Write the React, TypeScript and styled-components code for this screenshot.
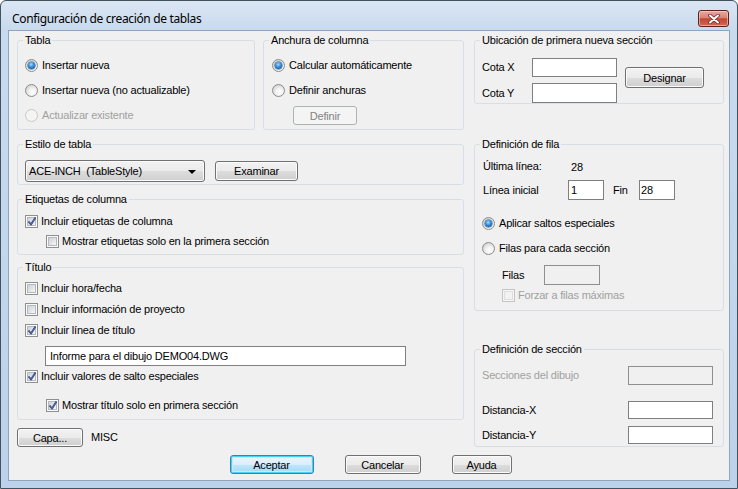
import React from "react";
import styled, { createGlobalStyle, css } from "styled-components";

const GlobalStyle = createGlobalStyle`
  html, body { margin: 0; padding: 0; background: #ffffff; }
  body { width: 738px; height: 489px; overflow: hidden; }
  *, *::before, *::after { box-sizing: border-box; }
`;

const Window = styled.div`
  width: 738px;
  height: 489px;
  border: 1px solid #43525f;
  border-radius: 6px 6px 0 0;
  background: linear-gradient(180deg, #dbe6f3 0px, #c8daee 29px, #bcd2ea 100%);
  padding: 0 7px 7px 7px;
  display: flex;
  flex-direction: column;
  font-family: "Liberation Sans", Arial, sans-serif;
  font-size: 11px;
  letter-spacing: -0.2px;
  color: #000;
`;

const TitleBar = styled.div`
  height: 29px;
  display: flex;
  justify-content: space-between;
  align-items: flex-start;
  flex: none;
`;

const Title = styled.div`
  font-family: "Noto Sans", "Open Sans", sans-serif;
  font-size: 12px;
  letter-spacing: -0.35px;
  line-height: 16px;
  padding: 10px 0 0 4px;
  color: #000;
`;

const CloseButton = styled.div`
  width: 31px;
  height: 17px;
  margin: 9px 1px 0 0;
  border: 1px solid #5e2018;
  border-radius: 3px;
  background: linear-gradient(180deg, #e8a99e 0%, #d88576 45%, #c24632 52%, #cf6a55 100%);
  box-shadow: inset 0 0 0 1px rgba(255, 220, 210, 0.55);
  display: flex;
  align-items: center;
  justify-content: center;
`;

const Client = styled.div`
  flex: 1;
  background: #f0f0f0;
  border: 1px solid #8ea4bf;
  padding: 3px 5px 0 8px;
  display: grid;
  grid-template-columns: 447px 250px;
  column-gap: 10px;
  row-gap: 8px;
  align-content: start;
`;

const Column = styled.div`
  display: flex;
  flex-direction: column;
`;

const TopRow = styled.div`
  display: flex;
  gap: 8px;
`;

const Group = styled.fieldset<{ $w?: number; $h: number; $mt?: number }>`
  margin: ${(p) => p.$mt ?? 0}px 0 0 0;
  padding: 0;
  min-width: 0;
  width: ${(p) => (p.$w ? `${p.$w}px` : "auto")};
  height: ${(p) => p.$h}px;
  border: 1px solid #d5dfe5;
  border-radius: 3px;
`;

const Legend = styled.legend`
  margin-left: 5px;
  padding: 0 2px;
  line-height: 13px;
  font-size: 11px;
`;

const Body = styled.div<{ $pt?: number; $pl?: number; $pr?: number }>`
  display: flex;
  flex-direction: column;
  padding: ${(p) => p.$pt ?? 0}px ${(p) => p.$pr ?? 0}px 0 ${(p) => p.$pl ?? 0}px;
`;

const Row = styled.div<{ $h?: number; $mt?: number; $indent?: number; $gap?: number; $between?: boolean }>`
  display: flex;
  align-items: center;
  height: ${(p) => (p.$h ? `${p.$h}px` : "auto")};
  margin-top: ${(p) => p.$mt ?? 0}px;
  padding-left: ${(p) => p.$indent ?? 0}px;
  gap: ${(p) => p.$gap ?? 0}px;
  justify-content: ${(p) => (p.$between ? "space-between" : "flex-start")};
`;

const Text = styled.span<{ $disabled?: boolean; $w?: number; $dy?: number; $pl?: number }>`
  color: ${(p) => (p.$disabled ? "#a0a0a0" : "#000")};
  white-space: pre;
  line-height: 13px;
  ${(p) => p.$w && css`width: ${p.$w}px; flex: none;`}
  ${(p) => p.$dy && css`padding-top: ${p.$dy}px;`}
  ${(p) => p.$pl && css`padding-left: ${p.$pl}px;`}
`;

const RadioCircle = styled.span<{ $checked?: boolean; $disabled?: boolean }>`
  position: relative;
  flex: none;
  width: 13px;
  height: 13px;
  border-radius: 50%;
  border: 1px solid ${(p) => (p.$disabled ? "#c8c8c8" : "#8c8c8c")};
  background: ${(p) =>
    p.$disabled
      ? "#f4f4f4"
      : "radial-gradient(circle at 60% 65%, #ffffff 0%, #f3f3f3 35%, #d2d2d2 80%, #c4c4c4 100%)"};
  margin-right: 4px;
  ${(p) =>
    p.$checked &&
    css`
      &::after {
        content: "";
        position: absolute;
        left: 2px;
        top: 2px;
        width: 7px;
        height: 7px;
        border-radius: 50%;
        background: radial-gradient(circle at 45% 35%, #a9dcff 0%, #3d95df 40%, #0f4f98 85%, #0a3b74 100%);
        box-shadow: 0 0 0 0.5px #1c4f86;
      }
    `}
`;

const CheckBoxBox = styled.span<{ $disabled?: boolean }>`
  position: relative;
  flex: none;
  width: 13px;
  height: 13px;
  border: 1px solid ${(p) => (p.$disabled ? "#c4c4c4" : "#8e8f8f")};
  background: ${(p) => (p.$disabled ? "#f6f6f6" : "#fbfbfb")};
  margin-right: 3px;
  &::before {
    content: "";
    position: absolute;
    left: 1px;
    top: 1px;
    width: 9px;
    height: 9px;
    border: 1px solid ${(p) => (p.$disabled ? "#dedede" : "#b4b9bf")};
    background: ${(p) =>
      p.$disabled ? "#f2f2f2" : "linear-gradient(135deg, #cdd1d7 0%, #e3e5e8 55%, #f7f7f7 100%)"};
  }
`;

const CheckMark = styled.svg`
  position: absolute;
  left: 1px;
  top: 0px;
  width: 10px;
  height: 11px;
`;

const Btn = styled.button<{ $w: number; $h?: number; $primary?: boolean }>`
  flex: none;
  width: ${(p) => p.$w}px;
  height: ${(p) => p.$h ?? 20}px;
  padding: 0;
  margin: 0;
  font-family: inherit;
  font-size: 11px;
  letter-spacing: -0.2px;
  color: #000;
  border: 1px solid #707070;
  border-radius: 3px;
  background: linear-gradient(180deg, #f2f2f2 0%, #ebebeb 50%, #dddddd 51%, #cfcfcf 100%);
  box-shadow: inset 0 0 0 1px #fbfbfb;
  ${(p) =>
    p.$primary &&
    css`
      border-color: #3c7fb1;
      background: linear-gradient(180deg, #eaf6fd 0%, #d9f0fc 50%, #bee6fd 51%, #a7d9f5 100%);
      box-shadow: inset 0 0 0 1px #48d0f8, inset 0 0 0 2px #c4ecfd;
    `}
  &:disabled {
    border-color: #adb2b5;
    background: #f4f4f4;
    color: #838383;
    box-shadow: none;
  }
`;

const Combo = styled.div`
  flex: none;
  width: 180px;
  height: 22px;
  border: 1px solid #707070;
  border-radius: 3px;
  background: linear-gradient(180deg, #f2f2f2 0%, #ebebeb 50%, #dddddd 51%, #cfcfcf 100%);
  box-shadow: inset 0 0 0 1px #fbfbfb;
  display: flex;
  align-items: center;
  justify-content: space-between;
  padding: 0 8px 0 3px;
`;

const Arrow = styled.span`
  width: 0;
  height: 0;
  border-left: 4px solid transparent;
  border-right: 4px solid transparent;
  border-top: 4px solid #000;
  margin-top: 1px;
`;

const Field = styled.input<{ $w: number; $h?: number; $pad?: number; $ml?: number }>`
  flex: none;
  width: ${(p) => p.$w}px;
  height: ${(p) => p.$h ?? 20}px;
  margin: 0 0 0 ${(p) => p.$ml ?? 0}px;
  padding: 0 ${(p) => p.$pad ?? 2}px;
  border: 1px solid #7f7f7f;
  border-radius: 0;
  background: #ffffff;
  font-family: inherit;
  font-size: 11px;
  letter-spacing: -0.2px;
  color: #000;
  outline: none;
  &:disabled {
    background: #f0f0f0;
    border-color: #8f8f8f;
  }
`;

const Grid = styled.div`
  display: grid;
  grid-template-columns: 42px 85px auto;
  column-gap: 8px;
  row-gap: 6px;
  align-items: center;
`;

const GridButton = styled.div`
  grid-column: 3;
  grid-row: 1 / span 2;
  align-self: start;
  margin-top: 9px;
`;

const ButtonRow = styled.div`
  grid-column: 1 / -1;
  display: flex;
  justify-content: center;
  gap: 31px;
`;

function Radio({ label, checked, disabled }: { label: string; checked?: boolean; disabled?: boolean }) {
  return (
    <Row $h={25}>
      <RadioCircle $checked={checked} $disabled={disabled} />
      <Text $disabled={disabled}>{label}</Text>
    </Row>
  );
}

function Check({
  label,
  checked,
  disabled,
  h = 21,
  mt,
  indent,
}: {
  label: string;
  checked?: boolean;
  disabled?: boolean;
  h?: number;
  mt?: number;
  indent?: number;
}) {
  return (
    <Row $h={h} $mt={mt} $indent={indent}>
      <CheckBoxBox $disabled={disabled}>
        {checked && (
          <CheckMark viewBox="0 0 10 11">
            <path d="M1.5 5.5 L4 8.5 L8.5 1.5" fill="none" stroke="#2c3f7c" strokeWidth="1.8" strokeLinejoin="round" />
            <path d="M1.5 5.5 L4 8.5 L8.5 1.5" fill="none" stroke="#6f86c8" strokeWidth="0.6" />
          </CheckMark>
        )}
      </CheckBoxBox>
      <Text $disabled={disabled}>{label}</Text>
    </Row>
  );
}

export default function App() {
  return (
    <>
      <GlobalStyle />
      <Window>
        <TitleBar>
          <Title>Configuración de creación de tablas</Title>
          <CloseButton>
            <svg width="12" height="10" viewBox="0 0 12 10">
              <path d="M2 1.5 L10 8.5 M10 1.5 L2 8.5" stroke="#6b2a22" strokeWidth="3.6" strokeLinecap="round" />
              <path d="M2 1.5 L10 8.5 M10 1.5 L2 8.5" stroke="#ffffff" strokeWidth="2" strokeLinecap="round" />
            </svg>
          </CloseButton>
        </TitleBar>
        <Client>
          <Column>
            <TopRow>
              <Group $w={238} $h={96}>
                <Legend>Tabla</Legend>
                <Body $pt={6} $pl={7}>
                  <Radio checked label="Insertar nueva" />
                  <Radio label="Insertar nueva (no actualizable)" />
                  <Radio disabled label="Actualizar existente" />
                </Body>
              </Group>
              <Group $w={201} $h={96}>
                <Legend>Anchura de columna</Legend>
                <Body $pt={6} $pl={8}>
                  <Radio checked label="Calcular automáticamente" />
                  <Radio label="Definir anchuras" />
                  <Row $h={25} $indent={21}>
                    <Btn disabled $w={64} $h={19}>
                      Definir
                    </Btn>
                  </Row>
                </Body>
              </Group>
            </TopRow>

            <Group $h={47} $mt={8}>
              <Legend>Estilo de tabla</Legend>
              <Body $pt={9} $pl={7}>
                <Row $gap={10}>
                  <Combo>
                    <Text>ACE-INCH  (TableStyle)</Text>
                    <Arrow />
                  </Combo>
                  <Btn $w={83}>Examinar</Btn>
                </Row>
              </Body>
            </Group>

            <Group $h={62} $mt={8}>
              <Legend>Etiquetas de columna</Legend>
              <Body $pt={5} $pl={7}>
                <Check checked h={20} label="Incluir etiquetas de columna" />
                <Check h={20} indent={21} label="Mostrar etiquetas solo en la primera sección" />
              </Body>
            </Group>

            <Group $h={159} $mt={6}>
              <Legend>Título</Legend>
              <Body $pt={4} $pl={7}>
                <Check label="Incluir hora/fecha" />
                <Check label="Incluir información de proyecto" />
                <Check checked label="Incluir línea de título" />
                <Row $mt={5}>
                  <Field $w={361} $h={20} $pad={4} $ml={20} defaultValue="Informe para el dibujo DEMO04.DWG" />
                </Row>
                <Check checked label="Incluir valores de salto especiales" />
                <Check checked mt={8} indent={21} label="Mostrar título solo en primera sección" />
              </Body>
            </Group>

            <Row $mt={8} $gap={8}>
              <Btn $w={66} $h={19}>
                Capa...
              </Btn>
              <Text>MISC</Text>
            </Row>
          </Column>

          <Column>
            <Group $h={70}>
              <Legend>Ubicación de primera nueva sección</Legend>
              <Body $pt={11} $pl={7}>
                <Grid>
                  <Text>Cota X</Text>
                  <Field $w={85} $h={19} />
                  <GridButton>
                    <Btn $w={79} $h={21}>
                      Designar
                    </Btn>
                  </GridButton>
                  <Text>Cota Y</Text>
                  <Field $w={85} $h={20} />
                </Grid>
              </Body>
            </Group>

            <Group $h={173} $mt={34}>
              <Legend>Definición de fila</Legend>
              <Body $pt={7} $pl={7}>
                <Row $h={16} $indent={1}>
                  <Text $w={88}>Última línea:</Text>
                  <Text $dy={3}>28</Text>
                </Row>
                <Row $mt={6} $indent={1}>
                  <Text $w={85}>Línea inicial</Text>
                  <Field $w={36} $h={20} $pad={2} defaultValue="1" />
                  <Text $w={35} $pl={9}>
                    Fin
                  </Text>
                  <Field $w={36} $h={20} $pad={1} defaultValue="28" />
                </Row>
                <Row $mt={11} />
                <Radio checked label="Aplicar saltos especiales" />
                <Radio label="Filas para cada sección" />
                <Row $mt={4} $indent={20}>
                  <Text $w={42}>Filas</Text>
                  <Field disabled $w={56} $h={20} />
                </Row>
                <Check disabled h={20} indent={20} label="Forzar a filas máximas" />
              </Body>
            </Group>

            <Group $h={104} $mt={32}>
              <Legend>Definición de sección</Legend>
              <Body $pt={10} $pl={7} $pr={10}>
                <Row $between>
                  <Text $disabled>Secciones del dibujo</Text>
                  <Field disabled $w={85} $h={19} />
                </Row>
                <Row $between $mt={16}>
                  <Text>Distancia-X</Text>
                  <Field $w={85} $h={18} />
                </Row>
                <Row $between $mt={7}>
                  <Text>Distancia-Y</Text>
                  <Field $w={85} $h={18} />
                </Row>
              </Body>
            </Group>
          </Column>

          <ButtonRow>
            <Btn $primary $w={84} $h={19}>
              Aceptar
            </Btn>
            <Btn $w={76} $h={19}>
              Cancelar
            </Btn>
            <Btn $w={60} $h={19}>
              Ayuda
            </Btn>
          </ButtonRow>
        </Client>
      </Window>
    </>
  );
}
